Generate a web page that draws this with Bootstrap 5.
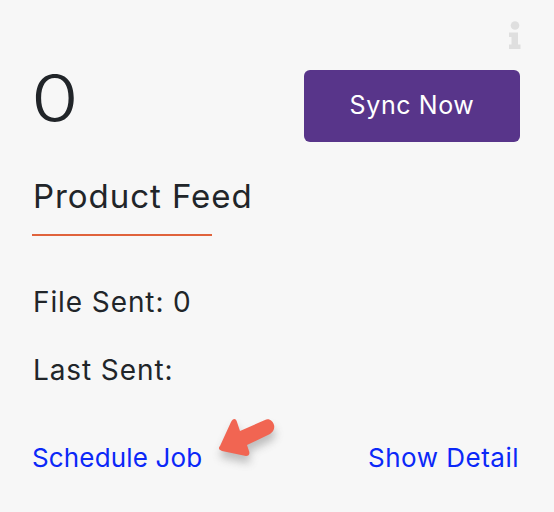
<!DOCTYPE html>
<html lang="en">
<head>
<meta charset="utf-8">
<title>Product Feed</title>
<link rel="stylesheet" href="https://cdn.jsdelivr.net/npm/bootstrap@5.3.0/dist/css/bootstrap.min.css">
<style>
html, body { height: 100%; }
body { background: #f7f7f7; font-family: Inter, "Liberation Sans", sans-serif; color: #212529; overflow: hidden; }
.feed-panel { height: 512px; padding: 20px 34px 0 33px; position: relative; }
.info-row { height: 34px; margin-right: -1px; }
.count-row { height: 88px; align-items: flex-start; }
.count-num { font-size: 66px; line-height: 1; font-weight: 300; margin: 11px 0 0 -2px; transform: scaleX(1.17); transform-origin: left center; }
.sync-btn { width: 216px; height: 72px; margin-top: 16px; background: #58358a; border: 0; border-radius: 6px; color: #fff; font-size: 25px; font-weight: 400; padding: 0; letter-spacing: .6px; }
.sync-btn:hover { background: #58358a; color: #fff; }
.feed-title { font-size: 33px; line-height: 38px; font-weight: 400; margin: 35px 0 0; letter-spacing: .95px; }
.feed-rule { width: 180px; height: 2px; background: #e0633c; margin: 19px 0 0 -1px; opacity: 1; border: 0; }
.stat-line { font-size: 28px; line-height: 32px; margin: 0; letter-spacing: .9px; }
.stat-first { margin-top: 50px; }
.stat-second { margin-top: 36px; }
.link-row { margin-top: 56px; margin-right: 1px; }
.link-row a { color: #0b28f8; font-size: 26px; line-height: 32px; text-decoration: none; letter-spacing: .5px; }
.link-row a.link-tight { letter-spacing: .15px; margin-left: -1px; }
.callout-arrow { position: absolute; left: 210px; top: 410px; width: 70px; height: 56px; overflow: visible; }
</style>
</head>
<body>
<main class="feed-panel">
  <div class="info-row d-flex justify-content-end">
    <svg width="13" height="29" viewBox="0 0 13 29" aria-label="Info"><circle cx="7" cy="5.500" r="4.300" fill="#dfdfdf"/><path d="M1 12.500h9v12h2.500v4.500H1v-4.500h2.500v-7.500H1z" fill="#dfdfdf"/></svg>
  </div>
  <div class="count-row d-flex justify-content-between">
    <div class="count-num">0</div>
    <button type="button" class="btn sync-btn">Sync Now</button>
  </div>
  <h2 class="feed-title">Product Feed</h2>
  <hr class="feed-rule">
  <p class="stat-line stat-first">File Sent: 0</p>
  <p class="stat-line stat-second">Last Sent:</p>
  <div class="link-row d-flex justify-content-between">
    <a href="#" class="link-tight">Schedule Job</a>
    <a href="#">Show Detail</a>
  </div>
  <svg class="callout-arrow" viewBox="0 0 70 56" aria-hidden="true">
    <defs><filter id="sh" x="-30%" y="-30%" width="170%" height="170%"><feGaussianBlur stdDeviation="4"/></filter></defs>
    <path d="M55 10 C59 8 63 11 64 15 C65 19 63 22 60 24 L37 35 L39 41 C40 44 39 46 36 46 L12 41 C9 40 8 38 10 36 L21 12 C23 8 26 8 27 12 L30 21 Z" fill="#777" opacity=".45" filter="url(#sh)" transform="translate(1 7)"/>
    <path d="M55 10 C59 8 63 11 64 15 C65 19 63 22 60 24 L37 35 L39 41 C40 44 39 46 36 46 L12 41 C9 40 8 38 10 36 L21 12 C23 8 26 8 27 12 L30 21 Z" fill="#f16552"/>
  </svg>
</main>
</body>
</html>
